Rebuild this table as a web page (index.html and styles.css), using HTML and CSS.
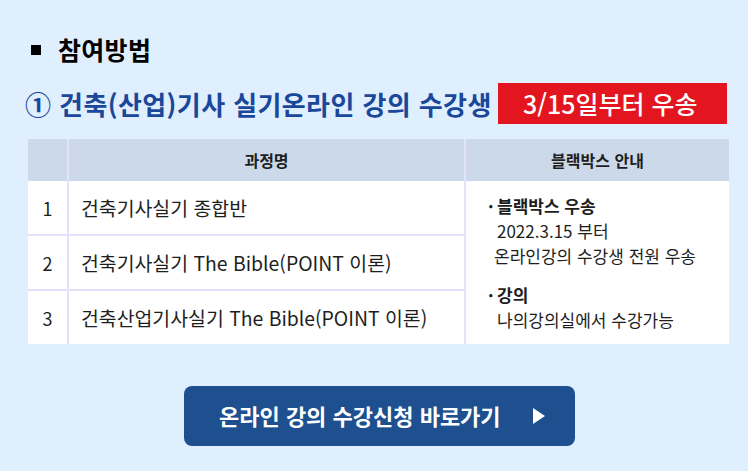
FILE: index.html
```html
<!DOCTYPE html>
<html lang="ko">
<head>
<meta charset="utf-8">
<link rel="stylesheet" href="styles.css">
</head>
<body>
<div class="page">
  <div class="heading">
    <span class="sq"></span>
    <span class="heading-text">참여방법</span>
  </div>
  <div class="subhead">
    <span class="subtitle">① 건축(산업)기사 실기온라인 강의 수강생</span>
    <span class="badge">3/15일부터 우송</span>
  </div>
  <div class="tbl">
    <div class="th c1"></div>
    <div class="th c2">과정명</div>
    <div class="th c3">블랙박스 안내</div>

    <div class="td num c1 rb">1</div>
    <div class="td name c2 rb">건축기사실기 종합반</div>
    <div class="info">
      <div class="grp">
        <div class="bl"><span class="dot">·</span><b>블랙박스 우송</b></div>
        <div class="sub">2022.3.15 부터</div>
        <div class="sub sub2">온라인강의 수강생 전원 우송</div>
      </div>
      <div class="grp g2">
        <div class="bl"><span class="dot">·</span><b>강의</b></div>
        <div class="sub">나의강의실에서 수강가능</div>
      </div>
    </div>

    <div class="td num c1 rb">2</div>
    <div class="td name c2 rb">건축기사실기 The Bible(POINT 이론)</div>

    <div class="td num c1">3</div>
    <div class="td name c2">건축산업기사실기 The Bible(POINT 이론)</div>
  </div>
  <a class="btn" href="#">
    <span class="btn-text">온라인 강의 수강신청 바로가기</span>
    <svg class="tri" width="12" height="16" viewBox="0 0 12 16"><path d="M0 0 L12 8 L0 16 Z" fill="#ffffff"/></svg>
  </a>
</div>
</body>
</html>
```

FILE: styles.css
```css
* { box-sizing: border-box; }
html, body {
  margin: 0;
  padding: 0;
  background: #e0effd;
}
body {
  width: 748px;
  height: 471px;
  overflow: hidden;
  font-family: "Noto Sans CJK KR", "Noto Sans", sans-serif;
  color: #1e1e1e;
}
.page {
  padding-top: 34px;
}
.heading {
  display: flex;
  align-items: center;
  height: 30px;
  padding-left: 31px;
}
.sq {
  width: 10px;
  height: 10px;
  background: #000000;
  margin-top: 1px;
}
.heading-text {
  margin-left: 17px;
  font-size: 25px;
  font-weight: 700;
  line-height: 30px;
  color: #000000;
  letter-spacing: 0.3px;
}
.subhead {
  display: flex;
  align-items: center;
  justify-content: space-between;
  margin-top: 19px;
  padding-left: 25px;
  width: 727px;
  height: 41px;
}
.subtitle {
  font-size: 26px;
  font-weight: 700;
  color: #1a479a;
  line-height: 41px;
  letter-spacing: 0.4px;
  white-space: nowrap;
}
.badge {
  width: 229px;
  height: 41px;
  background: #e3151f;
  color: #ffffff;
  font-size: 25px;
  font-weight: 500;
  line-height: 41px;
  padding-left: 25px;
  white-space: nowrap;
}
.tbl {
  display: grid;
  grid-template-columns: 41px 397px 263px;
  grid-template-rows: 42px 55px 55px 53px;
  width: 701px;
  margin-left: 28px;
  margin-top: 15px;
}
.th {
  background: #ccd9ea;
  display: flex;
  align-items: center;
  justify-content: center;
  font-size: 16px;
  font-weight: 700;
  color: #1e1e1e;
}
.th.c1, .th.c2, .td.c1, .td.c2 {
  border-right: 2px solid #e4e2fb;
}
.td {
  background: #ffffff;
  display: flex;
  align-items: center;
}
.td.rb {
  border-bottom: 2px solid #e4e2fb;
}
.num {
  justify-content: center;
  font-size: 18px;
}
.name {
  padding-left: 12px;
  font-size: 19.4px;
  white-space: nowrap;
}
.info {
  grid-column: 3;
  grid-row: 2 / 5;
  background: #ffffff;
  padding-top: 12px;
  padding-left: 22px;
  font-size: 17px;
  line-height: 25px;
  white-space: nowrap;
}
.g2 {
  margin-top: 14px;
}
.bl {
  display: flex;
}
.dot {
  width: 9px;
  font-weight: 700;
}
.bl b {
  font-weight: 700;
}
.sub {
  padding-left: 9px;
}
.sub2 {
  padding-left: 6px;
}
.btn {
  display: flex;
  align-items: center;
  margin-top: 42px;
  margin-left: 184px;
  width: 391px;
  height: 60px;
  background: #1e4f8f;
  border-radius: 8px;
  text-decoration: none;
  padding-left: 35px;
}
.btn-text {
  color: #ffffff;
  font-size: 22px;
  font-weight: 700;
  line-height: 26px;
  margin-top: -3px;
  white-space: nowrap;
}
.tri {
  margin-left: auto;
  margin-right: 30px;
  display: block;
}
```
